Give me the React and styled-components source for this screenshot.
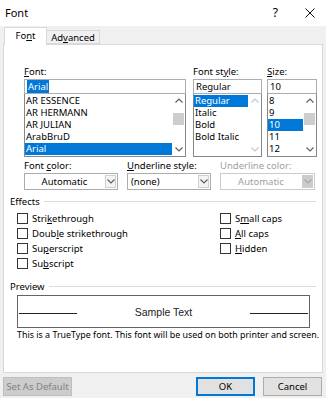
import styled, { createGlobalStyle } from 'styled-components';

const GlobalStyle = createGlobalStyle`
  html, body {
    margin: 0;
    padding: 0;
    background: #f0f0f0;
  }
  body {
    font-family: "Noto Sans", "Open Sans", sans-serif;
    font-size: 9.5px;
    color: #000;
  }
`;

const Window = styled.div`
  width: 326px;
  height: 398px;
  display: flex;
  flex-direction: column;
  background: #f0f0f0;
  overflow: hidden;
`;

const TitleBar = styled.div`
  height: 26px;
  flex: none;
  display: flex;
  align-items: center;
  background: #fff;
  padding: 0 11px 0 5px;
  font-size: 11px;

  .title {
    flex: 1;
    margin-top: -2px;
  }
  .help {
    margin-right: 27px;
    font-size: 12px;
    margin-top: -2px;
  }
`;

const TabStrip = styled.div`
  height: 18px;
  flex: none;
  display: flex;
  align-items: flex-end;
  padding-left: 4px;
`;

const Tab = styled.div`
  position: relative;
  z-index: 1;
  display: flex;
  align-items: center;
  justify-content: center;
  box-sizing: border-box;
  height: ${(p) => (p.$active ? '18px' : '14px')};
  width: ${(p) => (p.$active ? '43px' : '53px')};
  margin-bottom: ${(p) => (p.$active ? '-1px' : '0')};
  background: ${(p) => (p.$active ? '#fff' : '#f0f0f0')};
  border: 1px solid #d9d9d9;
  border-bottom: ${(p) => (p.$active ? 'none' : '1px solid #d9d9d9')};
  border-left: ${(p) => (p.$first ? '1px solid #d9d9d9' : 'none')};
  padding-bottom: ${(p) => (p.$active ? '2px' : '0')};
`;

const Panel = styled.div`
  height: 329px;
  flex: none;
  box-sizing: border-box;
  margin: 0 3px;
  background: #fff;
  border: 1px solid #d9d9d9;
  padding: 21px 6px 0 6px;
  display: flex;
  flex-direction: column;
`;

const FontGrid = styled.div`
  display: grid;
  grid-template-columns: 162px 69px 48px;
  column-gap: 7px;
  margin-left: 14px;

  & > div:nth-child(3) {
    margin-left: -2px;
  }
`;

const Field = styled.div`
  display: flex;
  flex-direction: column;
`;

const Label = styled.div`
  height: 12px;
  line-height: 12px;
  margin-bottom: 1px;
  white-space: nowrap;
  color: ${(p) => (p.$disabled ? '#a0a0a0' : '#000')};
`;

const TextBox = styled.div`
  height: 15px;
  box-sizing: border-box;
  border: 1px solid #abadb3;
  padding: 0 2px;
  line-height: 13px;
  background: #fff;

  span {
    background: ${(p) => (p.$selected ? '#0078d7' : 'transparent')};
    color: ${(p) => (p.$selected ? '#fff' : '#000')};
    padding: 0 1px;
  }
`;

const ListBox = styled.div`
  height: 63px;
  box-sizing: border-box;
  border: 1px solid #828790;
  border-top: none;
  display: flex;
  background: #fff;
`;

const Items = styled.div`
  flex: 1;
  padding-top: 1px;
  overflow: hidden;
`;

const Item = styled.div`
  height: 12px;
  line-height: 12px;
  padding-left: 1px;
  white-space: nowrap;
  background: ${(p) => (p.$selected ? '#0078d7' : 'transparent')};
  color: ${(p) => (p.$selected ? '#fff' : '#000')};
`;

const Scroll = styled.div`
  width: 13px;
  flex: none;
  display: flex;
  flex-direction: column;
  background: #fff;
`;

const ArrowBtn = styled.div`
  height: 13px;
  flex: none;
  display: flex;
  align-items: center;
  justify-content: center;
`;

const Track = styled.div`
  flex: 1;
  display: flex;
  flex-direction: column;
`;

const Thumb = styled.div`
  height: 12px;
  background: #cdcdcd;
  margin: 0 1px;
`;

const Chevron = ({ up, color }) => (
  <svg width="8" height="5" viewBox="0 0 8 5">
    <polyline
      points={up ? '0.5,4.5 4,1 7.5,4.5' : '0.5,0.5 4,4 7.5,0.5'}
      fill="none"
      stroke={color}
      strokeWidth="1.2"
    />
  </svg>
);

const Scrollbar = ({ thumb, disabled }) => {
  const color = disabled ? '#c8c8c8' : '#606060';
  return (
    <Scroll>
      <ArrowBtn>
        <Chevron up color={color} />
      </ArrowBtn>
      <Track>
        {thumb !== undefined && <Thumb style={{ marginTop: thumb }} />}
      </Track>
      <ArrowBtn>
        <Chevron color={color} />
      </ArrowBtn>
    </Scroll>
  );
};

const DropGrid = styled.div`
  display: grid;
  grid-template-columns: 94px 84px 95px;
  column-gap: 9px;
  margin-left: 14px;
  margin-top: 3px;
`;

const Combo = styled.div`
  height: 17px;
  box-sizing: border-box;
  border: 1px solid ${(p) => (p.$disabled ? '#cccccc' : '#adadad')};
  background: #fff;
  display: flex;
  align-items: stretch;
  color: ${(p) => (p.$disabled ? '#a0a0a0' : '#000')};

  .value {
    flex: 1;
    display: flex;
    align-items: center;
    justify-content: ${(p) => (p.$center ? 'center' : 'flex-start')};
    padding-left: ${(p) => (p.$center ? '0' : '3px')};
  }
`;

const ComboArrow = styled.div`
  width: 11px;
  margin: 1px;
  box-sizing: border-box;
  border: 1px solid ${(p) => (p.$disabled ? '#cccccc' : '#d0d0d0')};
  background: ${(p) => (p.$disabled ? '#cccccc' : '#f4f4f4')};
  display: flex;
  align-items: center;
  justify-content: center;
`;

const SectionHead = styled.div`
  display: flex;
  align-items: center;
  gap: 4px;
  height: 12px;
  margin-top: ${(p) => p.$top}px;

  &::after {
    content: '';
    flex: 1;
    height: 1px;
    background: #dcdcdc;
  }
`;

const Checks = styled.div`
  display: grid;
  grid-template-columns: 203px 1fr;
  grid-auto-rows: 15px;
  margin: 4px 0 0 7px;
`;

const Check = styled.label`
  display: flex;
  align-items: center;
  gap: 4px;
  grid-column: ${(p) => p.$col};

  &::before {
    content: '';
    width: 11px;
    height: 11px;
    box-sizing: border-box;
    border: 1px solid #333;
    background: #fff;
    flex: none;
  }
`;

const PreviewBox = styled.div`
  height: 33px;
  box-sizing: border-box;
  margin: 3px 6px 0 7px;
  border: 1px solid #646464;
  display: flex;
  align-items: center;
  padding: 0 1px 0 1px;
`;

const Rule = styled.div`
  width: 58px;
  height: 1px;
  background: #222;
  margin-top: 4px;
`;

const Sample = styled.div`
  flex: 1;
  text-align: center;
  font-family: "Liberation Sans", Arial, sans-serif;
  font-size: 10.5px;
  color: #222;
`;

const Note = styled.div`
  margin: 1px 0 0 7px;
  height: 12px;
  line-height: 12px;
  white-space: nowrap;
  font-size: 8.9px;
`;

const Footer = styled.div`
  flex: 1;
  display: flex;
  align-items: center;
  padding: 1px 4px 0 3px;
  gap: 8px;
`;

const Button = styled.div`
  height: 19px;
  width: ${(p) => p.$w}px;
  box-sizing: border-box;
  display: flex;
  align-items: center;
  justify-content: center;
  background: ${(p) => (p.$disabled ? '#cccccc' : '#e1e1e1')};
  border: 1px solid
    ${(p) => (p.$primary ? '#0078d7' : p.$disabled ? '#bfbfbf' : '#adadad')};
  box-shadow: ${(p) => (p.$primary ? 'inset 0 0 0 1px #0078d7' : 'none')};
  color: ${(p) => (p.$disabled ? '#838383' : '#000')};
  margin-right: ${(p) => (p.$push ? 'auto' : '0')};
`;

const fonts = ['AR ESSENCE', 'AR HERMANN', 'AR JULIAN', 'ArabBruD', 'Arial'];
const styles = ['Regular', 'Italic', 'Bold', 'Bold Italic'];
const sizes = ['8', '9', '10', '11', '12'];

export default function App() {
  return (
    <>
      <GlobalStyle />
      <Window>
        <TitleBar>
          <span className="title">Font</span>
          <span className="help">?</span>
          <svg width="10" height="10" viewBox="0 0 10 10">
            <path d="M0.5 0.5 L9.5 9.5 M9.5 0.5 L0.5 9.5" stroke="#111" strokeWidth="1" />
          </svg>
        </TitleBar>
        <TabStrip>
          <Tab $active $first>
            <span>
              Fo<u>n</u>t
            </span>
          </Tab>
          <Tab>
            <span>
              Ad<u>v</u>anced
            </span>
          </Tab>
        </TabStrip>
        <Panel>
          <FontGrid>
            <Field>
              <Label>
                <u>F</u>ont:
              </Label>
              <TextBox $selected>
                <span>Arial</span>
              </TextBox>
              <ListBox>
                <Items>
                  {fonts.map((f) => (
                    <Item key={f} $selected={f === 'Arial'}>
                      {f}
                    </Item>
                  ))}
                </Items>
                <Scrollbar thumb={6} />
              </ListBox>
            </Field>
            <Field>
              <Label>
                Font st<u>y</u>le:
              </Label>
              <TextBox>Regular</TextBox>
              <ListBox>
                <Items>
                  {styles.map((s) => (
                    <Item key={s} $selected={s === 'Regular'}>
                      {s}
                    </Item>
                  ))}
                </Items>
                <Scrollbar disabled />
              </ListBox>
            </Field>
            <Field>
              <Label>
                <u>S</u>ize:
              </Label>
              <TextBox>10</TextBox>
              <ListBox>
                <Items>
                  {sizes.map((s) => (
                    <Item key={s} $selected={s === '10'}>
                      {s}
                    </Item>
                  ))}
                </Items>
                <Scrollbar thumb={6} />
              </ListBox>
            </Field>
          </FontGrid>

          <DropGrid>
            <Field>
              <Label>
                Font <u>c</u>olor:
              </Label>
              <Combo $center>
                <span className="value">Automatic</span>
                <ComboArrow>
                  <Chevron color="#606060" />
                </ComboArrow>
              </Combo>
            </Field>
            <Field>
              <Label>
                <u>U</u>nderline style:
              </Label>
              <Combo>
                <span className="value">(none)</span>
                <ComboArrow>
                  <Chevron color="#606060" />
                </ComboArrow>
              </Combo>
            </Field>
            <Field>
              <Label $disabled>Underline color:</Label>
              <Combo $center $disabled>
                <span className="value">Automatic</span>
                <ComboArrow $disabled>
                  <Chevron color="#a8a8a8" />
                </ComboArrow>
              </Combo>
            </Field>
          </DropGrid>

          <SectionHead $top={5}>Effects</SectionHead>
          <Checks>
            <Check $col={1}>
              <span>
                Stri<u>k</u>ethrough
              </span>
            </Check>
            <Check $col={2}>
              <span>
                S<u>m</u>all caps
              </span>
            </Check>
            <Check $col={1}>
              <span>
                Doub<u>l</u>e strikethrough
              </span>
            </Check>
            <Check $col={2}>
              <span>
                <u>A</u>ll caps
              </span>
            </Check>
            <Check $col={1}>
              <span>
                Su<u>p</u>erscript
              </span>
            </Check>
            <Check $col={2}>
              <span>
                <u>H</u>idden
              </span>
            </Check>
            <Check $col={1}>
              <span>
                Su<u>b</u>script
              </span>
            </Check>
          </Checks>

          <SectionHead $top={9}>Preview</SectionHead>
          <PreviewBox>
            <Rule />
            <Sample>Sample Text</Sample>
            <Rule />
          </PreviewBox>
          <Note>This is a TrueType font. This font will be used on both printer and screen.</Note>
        </Panel>
        <Footer>
          <Button $w={69} $disabled $push>
            Set As Default
          </Button>
          <Button $w={59} $primary>
            OK
          </Button>
          <Button $w={59}>Cancel</Button>
        </Footer>
      </Window>
    </>
  );
}
